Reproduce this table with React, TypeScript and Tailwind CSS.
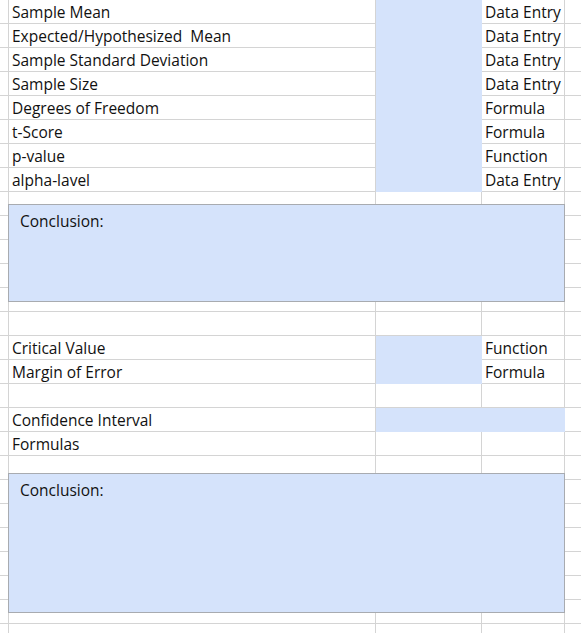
import React from "react";

type Row = { b?: string; c?: "blue" | ""; d?: string; cd?: boolean };

const rows: Row[] = [
  { b: "Sample Mean", c: "blue", d: "Data Entry" },
  { b: "Expected/Hypothesized  Mean", c: "blue", d: "Data Entry" },
  { b: "Sample Standard Deviation", c: "blue", d: "Data Entry" },
  { b: "Sample Size", c: "blue", d: "Data Entry" },
  { b: "Degrees of Freedom", c: "blue", d: "Formula" },
  { b: "t-Score", c: "blue", d: "Formula" },
  { b: "p-value", c: "blue", d: "Function" },
  { b: "alpha-lavel", c: "blue", d: "Data Entry" },
  {}, {}, {}, {}, {}, {},
  { b: "Critical Value", c: "blue", d: "Function" },
  { b: "Margin of Error", c: "blue", d: "Formula" },
  {},
  { b: "Confidence Interval", cd: true },
  { b: "Formulas" },
  {}, {}, {}, {}, {}, {}, {}, {},
];

function GridRow({ r }: { r: Row }) {
  return (
    <div className="flex h-[24px] w-full">
      <div className="w-[9px] shrink-0 border-r border-b border-[#d4d4d4]" />
      <div className="w-[367px] shrink-0 border-r border-b border-[#d4d4d4] pl-[3px] leading-[25.5px] whitespace-pre overflow-visible">
        {r.b}
      </div>
      {r.cd ? (
        <div className="w-[189px] shrink-0 border-b border-[#d5e3fb] bg-[#d5e3fb]" />
      ) : (
        <>
          <div
            className={
              r.c === "blue"
                ? "w-[106px] shrink-0 border-r border-b border-[#d5e3fb] bg-[#d5e3fb]"
                : "w-[106px] shrink-0 border-r border-b border-[#d4d4d4]"
            }
          />
          <div className="w-[83px] shrink-0 border-r border-b border-[#d4d4d4] pl-[3px] leading-[25.5px] whitespace-pre">
            {r.d}
          </div>
        </>
      )}
      <div className="flex-1 border-b border-[#d4d4d4]" />
    </div>
  );
}

export default function App() {
  return (
    <div
      className="relative w-[581px] h-[633px] overflow-hidden bg-white text-[15.5px] text-[#111111]"
      style={{ fontFamily: '"Open Sans", "Noto Sans", sans-serif' }}
    >
      <div className="flex flex-col">
        {rows.map((r, i) => (
          <GridRow key={i} r={r} />
        ))}
      </div>
      <div className="absolute left-[8px] top-[204px] w-[557px] h-[98px] border border-[#a8abb0] bg-[#d5e3fb] pl-[11px] pt-[5px] leading-[23px]">
        Conclusion:
      </div>
      <div className="absolute left-[8px] top-[473px] w-[557px] h-[140px] border border-[#a8abb0] bg-[#d5e3fb] pl-[11px] pt-[5px] leading-[23px]">
        Conclusion:
      </div>
    </div>
  );
}
